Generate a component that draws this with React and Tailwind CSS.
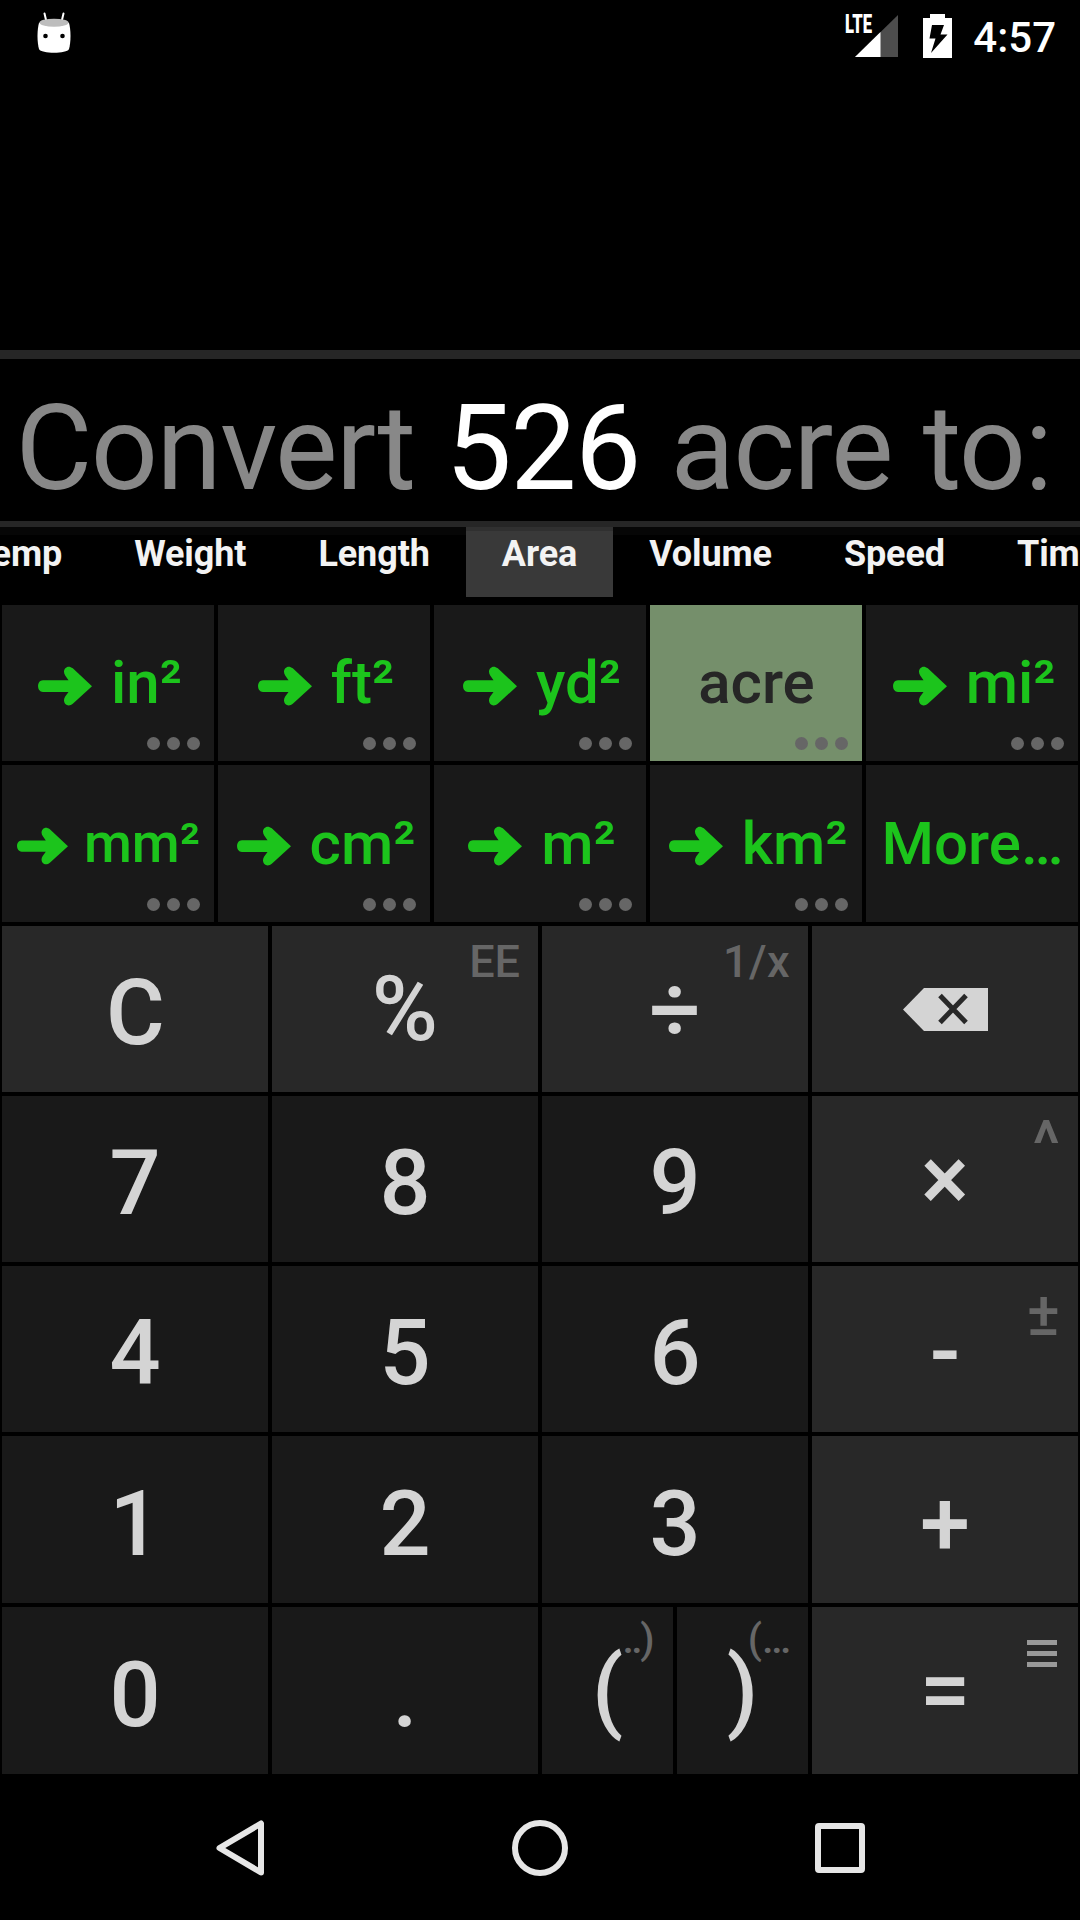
import React from "react";

const Arrow = ({ small }) => (
  <svg
    viewBox="0 0 54 40"
    className={small ? "mt-[5px] h-[38px] w-[51px] shrink-0" : "mt-[5px] h-10 w-[54px] shrink-0"}
    fill="#1cc41c"
  >
    <path d="M5 14.2H30.5L27.2 9.5C23.5 4 29 -2.5 34.8 2.3L54 20.2L34.8 37.8C29 42.5 23.5 36 27.2 30.5L30.5 26H5C-1.6 26-1.6 14.2 5 14.2Z" />
  </svg>
);

const Dots = () => (
  <div className="absolute right-3.5 bottom-[11px] flex gap-[7px]">
    <span className="size-[13px] rounded-full bg-[#666]" />
    <span className="size-[13px] rounded-full bg-[#666]" />
    <span className="size-[13px] rounded-full bg-[#666]" />
  </div>
);

const units = [
  { label: "in²" },
  { label: "ft²" },
  { label: "yd²" },
  { label: "acre", selected: true },
  { label: "mi²" },
  { label: "mm²", small: true },
  { label: "cm²" },
  { label: "m²" },
  { label: "km²" },
  { label: "More…", plain: true },
];

const Unit = ({ label, selected, small, plain }) => (
  <button
    className={`relative m-0.5 flex items-center justify-center whitespace-pre font-medium ${
      selected ? "bg-[#758f6b] text-[#262626]" : "bg-[#191919] text-[#1cc41c]"
    } ${small ? "gap-4 text-[55px]" : "gap-[19px] text-[60px]"} ${
      plain || small || selected ? "pl-px" : "pl-1"
    }`}
  >
    {!selected && !plain && <Arrow small={small} />}
    <span className="leading-none">{label}</span>
    {!plain && <Dots />}
  </button>
);

const Key = ({ children, hint, op, half, shift = "pt-2.5" }) => (
  <button
    className={`relative m-0.5 flex items-center justify-center text-[90px] leading-none font-medium text-[#d4d4d4] ${
      op ? "bg-[#282828]" : "bg-[#191919]"
    } ${half ? "col-span-1" : "col-span-2"} ${shift}`}
  >
    {hint}
    {children}
  </button>
);

const Hint = ({ children, className = "top-[13px] right-[18px] text-[45px]" }) => (
  <span className={`absolute leading-none text-[#666] ${className}`}>{children}</span>
);

const tabs = ["Temp", "Weight", "Length", "Area", "Volume", "Speed", "Time"];

export default function App() {
  return (
    <div className="flex h-[1920px] w-[1080px] flex-col overflow-hidden bg-black font-['Roboto',sans-serif]">
      <header className="flex h-[72px] shrink-0 items-start justify-between pr-6 pl-[37px]">
        <svg className="mt-3 h-[41px] w-[34px]" viewBox="0 0 34 41">
          <path d="M7.5 1.5L9.5 10M26.5 1.5L24.5 10" stroke="#fff" strokeWidth="2" strokeLinecap="round" />
          <path d="M2 11C8 7 26 7 32 11C34 18 34 30 32 37C30 42 4 42 2 37C0 30 0 18 2 11Z" fill="#fff" />
          <ellipse cx="17" cy="10.7" rx="14.5" ry="4" fill="#bdbdbd" />
          <circle cx="8.5" cy="24" r="2.3" fill="#000" />
          <circle cx="25.5" cy="24" r="2.3" fill="#000" />
        </svg>
        <div className="flex items-start">
          <div className="relative mt-[15px] h-[42px] w-[53px]">
            <svg className="absolute right-0 h-[42px] w-[43px]" viewBox="0 0 43 42">
              <path d="M43 0V42H0Z" fill="#4d4d4d" />
              <path d="M25.5 17V42H0Z" fill="#fff" />
            </svg>
            <span className="absolute top-0 left-0 origin-left scale-x-[0.64] text-[26px] leading-[19px] font-black text-white">
              LTE
            </span>
          </div>
          <svg className="mt-3.5 ml-[25px] h-11 w-[29px]" viewBox="0 0 29 44">
            <path d="M7 0H22V4H29V44H0V4H7Z" fill="#fff" />
            <path d="M9 11H21L17.5 20.5H24.5L8 39L12.5 24.5H6.5Z" fill="#000" />
          </svg>
          <span className="mt-[17px] ml-[21px] text-[42px] leading-[42px] font-medium text-white">4:57</span>
        </div>
      </header>

      <div className="h-[278px] shrink-0" />
      <div className="h-[9px] shrink-0 bg-[#262626]" />
      <div className="flex h-[162px] shrink-0 items-center justify-center pt-[17px] pr-[13px] text-[118px] leading-none tracking-[-1.5px] whitespace-pre text-[#888] [word-spacing:3px]">
        Convert <span className="text-white">526</span> acre to:
      </div>
      <div className="h-1.5 shrink-0 bg-[#262626]" />

      <nav className="relative flex h-[76px] shrink-0 items-start justify-center overflow-hidden pr-2.5">
        <div className="absolute inset-x-0 top-0 h-2 bg-[#060606]" />
        {tabs.map((t) => (
          <div
            key={t}
            className={`relative h-[70px] px-9 text-[36px] leading-[44px] font-bold tracking-[-0.1px] text-[#f3f3f3] ${
              t === "Area" ? "border-t-4 border-[#303030] bg-[#393939] pt-px" : "pt-[5px]"
            }`}
          >
            {t}
          </div>
        ))}
      </nav>

      <section className="grid h-[321px] shrink-0 grid-cols-5 grid-rows-[160px_161px]">
        {units.map((u) => (
          <Unit key={u.label} {...u} />
        ))}
      </section>

      <section className="grid h-[852px] shrink-0 grid-cols-8 grid-rows-[170px_170px_170px_171px_171px]">
        <Key op shift="pt-2.5 pl-px">C</Key>
        <Key op shift="pt-0.5" hint={<Hint>EE</Hint>}>%</Key>
        <Key op shift="pt-1" hint={<Hint className="top-[13px] right-[18px] text-[45px] tracking-[0.4px]">1/x</Hint>}>÷</Key>
        <Key op shift="">
          <svg className="h-[43px] w-[85px]" viewBox="0 0 85 43">
            <path d="M0 21.5L21 0H85V43H21Z" fill="#d4d4d4" />
            <path d="M37 7.5L63 34.5M63 7.5L37 34.5" stroke="#282828" strokeWidth="5" />
          </svg>
        </Key>
        <Key>7</Key>
        <Key>8</Key>
        <Key>9</Key>
        <Key op shift="pt-0.5" hint={<Hint className="top-[17px] right-[18px] text-[64px]">^</Hint>}>×</Key>
        <Key>4</Key>
        <Key>5</Key>
        <Key>6</Key>
        <Key op shift="pt-1.5" hint={<Hint className="top-[17px] right-[18px] text-[62px]">±</Hint>}>-</Key>
        <Key>1</Key>
        <Key>2</Key>
        <Key>3</Key>
        <Key op>+</Key>
        <Key>0</Key>
        <Key>.</Key>
        <Key half shift="" hint={<Hint className="top-3 right-[21px] text-[41px] tracking-[-2.5px]">..)</Hint>}><span className="relative">(</span></Key>
        <Key half shift="" hint={<Hint className="top-3 right-[17px] text-[41px]">(…</Hint>}><span className="relative">)</span></Key>
        <Key
          op
          shift="pt-px"
          hint={
            <svg className="absolute top-[33px] right-[21px] h-[27px] w-[30px]" viewBox="0 0 30 27">
              <path d="M0 2.5H30M0 13.5H30M0 24.5H30" stroke="#999" strokeWidth="5" />
            </svg>
          }
        >
          =
        </Key>
      </section>

      <footer className="flex h-36 shrink-0 items-center justify-center">
        <div className="flex w-[300px] justify-center">
          <svg className="h-14 w-12" viewBox="0 0 48 56">
            <path d="M45 3.5V52.5L3.5 28Z" fill="none" stroke="#e6e6e6" strokeWidth="6" strokeLinejoin="round" />
          </svg>
        </div>
        <div className="flex w-[300px] justify-center">
          <div className="size-14 rounded-full border-6 border-[#e6e6e6]" />
        </div>
        <div className="flex w-[300px] justify-center">
          <div className="size-[50px] rounded-[4px] border-6 border-[#e6e6e6]" />
        </div>
      </footer>
    </div>
  );
}
